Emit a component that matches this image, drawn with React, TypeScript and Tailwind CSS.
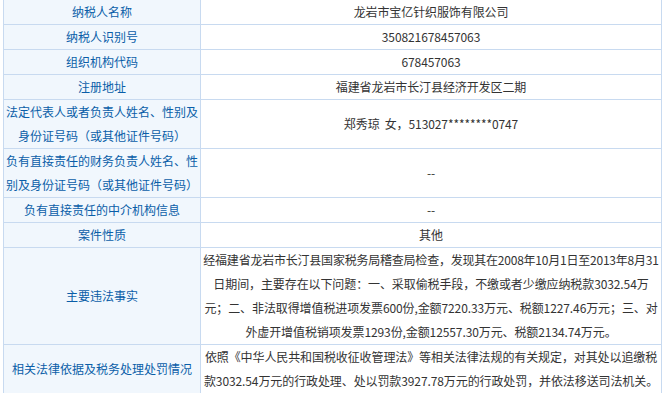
import React from "react";

type Row = { label: React.ReactNode; value: React.ReactNode; h: string };

const rows: Row[] = [
  { label: "纳税人名称", value: "龙岩市宝亿针织服饰有限公司", h: "h-[24px]" },
  { label: "纳税人识别号", value: "350821678457063", h: "h-[24px]" },
  { label: "组织机构代码", value: "678457063", h: "h-[24px]" },
  { label: "注册地址", value: "福建省龙岩市长汀县经济开发区二期", h: "h-[24px]" },
  {
    label: (
      <>
        法定代表人或者负责人姓名、性别及
        <br />
        身份证号码（或其他证件号码）
      </>
    ),
    value: <>郑秀琼&nbsp;&nbsp;女，513027********0747</>,
    h: "h-[48px]",
  },
  {
    label: (
      <>
        负有直接责任的财务负责人姓名、性
        <br />
        别及身份证号码（或其他证件号码）
      </>
    ),
    value: "--",
    h: "h-[48px]",
  },
  { label: "负有直接责任的中介机构信息", value: "--", h: "h-[24px]" },
  { label: "案件性质", value: "其他", h: "h-[24px]" },
  {
    label: "主要违法事实",
    value: (
      <>
        <span className="tracking-[-0.22px]">
          经福建省龙岩市长汀县国家税务局稽查局检查，发现其在2008年10月1日至2013年8月31
        </span>
        <br />
        日期间，主要存在以下问题：一、采取偷税手段，不缴或者少缴应纳税款3032.54万
        <br />
        元；二、非法取得增值税进项发票600份,金额7220.33万元、税额1227.46万元；三、对
        <br />
        外虚开增值税销项发票1293份,金额12557.30万元、税额2134.74万元。
      </>
    ),
    h: "h-[96px]",
  },
  {
    label: "相关法律依据及税务处理处罚情况",
    value: (
      <>
        依照《中华人民共和国税收征收管理法》等相关法律法规的有关规定，对其处以追缴税
        <br />
        款3032.54万元的行政处理、处以罚款3927.78万元的行政处罚，并依法移送司法机关。
      </>
    ),
    h: "h-[48px]",
  },
];

export default function App() {
  return (
    <div className="bg-white w-[663px] h-[393px] overflow-hidden pl-[3px] font-['Noto_Sans_CJK_SC',sans-serif] text-[12px] leading-[24px]">
      <div className="w-[659px] border-l border-r border-[#c8daf0]">
        {rows.map((r, i) => (
          <div key={i} className="flex border-b border-[#c8daf0]">
            <div
              className={`w-[197px] shrink-0 ${r.h} bg-[#f1f7fd] text-[#0a5ea8] flex items-center justify-center text-center border-r border-[#c8daf0] whitespace-nowrap`}
            >
              <div>{r.label}</div>
            </div>
            <div
              className={`flex-1 ${r.h} flex items-center justify-center text-center text-[#333333] whitespace-nowrap tracking-[-0.1px]`}
            >
              <div>{r.value}</div>
            </div>
          </div>
        ))}
      </div>
    </div>
  );
}
